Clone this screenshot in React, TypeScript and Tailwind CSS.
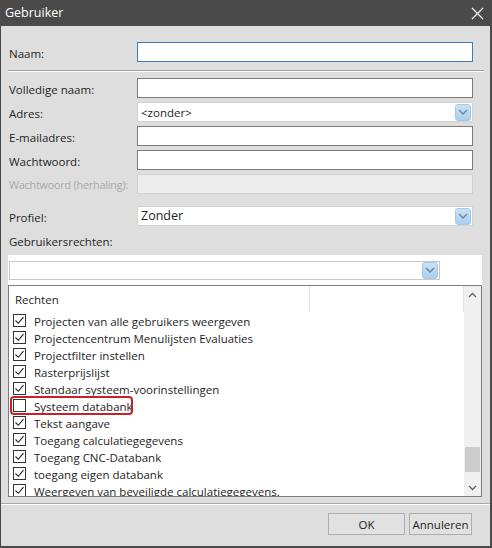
import React from "react";

const font = { fontFamily: '"Segoe UI", "Open Sans", "Noto Sans", sans-serif' };

const rights: { label: string; checked: boolean; marked?: boolean }[] = [
  { label: "Projecten van alle gebruikers weergeven", checked: true },
  { label: "Projectencentrum Menulijsten Evaluaties", checked: true },
  { label: "Projectfilter instellen", checked: true },
  { label: "Rasterprijslijst", checked: true },
  { label: "Standaar systeem-voorinstellingen", checked: true },
  { label: "Systeem databank", checked: false, marked: true },
  { label: "Tekst aangave", checked: true },
  { label: "Toegang calculatiegegevens", checked: true },
  { label: "Toegang CNC-Databank", checked: true },
  { label: "toegang eigen databank", checked: true },
  { label: "Weergeven van beveiligde calculatiegegevens.", checked: true },
];

function ComboArrow() {
  return (
    <div className="w-[16px] h-[17px] rounded-[3px] bg-gradient-to-b from-[#c9e2f5] to-[#a9cfee] border border-[#a5c8e6] flex items-center justify-center">
      <svg width="10" height="6" viewBox="0 0 10 6">
        <path d="M1 1l4 4 4-4" fill="none" stroke="#6f8aa3" strokeWidth="1.5" />
      </svg>
    </div>
  );
}

function Row({ label, children, disabled }: { label: string; children: React.ReactNode; disabled?: boolean }) {
  return (
    <div className="flex items-center h-[20px] pl-[8px]">
      <div
        className={`w-[128px] pt-[3px] whitespace-nowrap ${
          disabled ? "text-[#a8a8a8] text-[10.8px] tracking-[-0.2px]" : "text-[#1e1e1e]"
        }`}
      >
        {label}
      </div>
      {children}
    </div>
  );
}

function CheckBox({ checked }: { checked: boolean }) {
  return (
    <div className="w-[13px] h-[13px] border border-[#333] bg-white flex items-center justify-center shrink-0">
      {checked && (
        <svg width="11" height="11" viewBox="0 0 11 11">
          <path d="M1.5 5.5l2.8 2.8L9.5 2.2" fill="none" stroke="#222" strokeWidth="1.1" />
        </svg>
      )}
    </div>
  );
}

export default function App() {
  return (
    <div className="w-[492px] h-[548px] bg-[#4a4a4a] flex flex-col" style={font}>
      <div className="h-[26px] shrink-0 flex items-center justify-between pl-[5px] pr-[8px] text-white text-[12.5px]">
        <span>Gebruiker</span>
        <svg width="13" height="13" viewBox="0 0 13 13">
          <path d="M1 1l11 11M12 1L1 12" stroke="#fff" strokeWidth="1.2" />
        </svg>
      </div>

      <div className="flex-1 ml-[1px] mr-[2px] mb-[2px] bg-[#dedede] flex flex-col text-[11.5px] text-[#1e1e1e]">
        <div className="mt-[16px]">
          <Row label="Naam:">
            <div className="w-[336px] h-[20px] bg-white border border-[#3a7db5]" />
          </Row>
        </div>

        <div className="mt-[8px] ml-[7px] mr-[6px] h-[2px] border-t border-[#a0a0a0] border-b border-b-white" />

        <div className="mt-[6px] flex flex-col gap-[4px]">
          <Row label="Volledige naam:">
            <div className="w-[336px] h-[20px] bg-white border border-[#7a7a7a]" />
          </Row>
          <Row label="Adres:">
            <div className="w-[336px] h-[20px] bg-white border border-[#d2d2d2] flex items-center justify-between pl-[3px] pr-[1px]">
              <span className="pt-[1px]">&lt;zonder&gt;</span>
              <ComboArrow />
            </div>
          </Row>
          <Row label="E-mailadres:">
            <div className="w-[336px] h-[20px] bg-white border border-[#7a7a7a]" />
          </Row>
          <Row label="Wachtwoord:">
            <div className="w-[336px] h-[20px] bg-white border border-[#7a7a7a]" />
          </Row>
          <Row label="Wachtwoord (herhaling):" disabled>
            <div className="w-[336px] h-[20px] bg-[#ececec] border border-[#d0d0d0]" />
          </Row>
        </div>

        <div className="mt-[12px]">
          <Row label="Profiel:">
            <div className="w-[336px] h-[20px] bg-white border border-[#d2d2d2] flex items-center justify-between pl-[3px] pr-[1px] text-[12.5px]">
              <span className="pt-[1px]">Zonder</span>
              <ComboArrow />
            </div>
          </Row>
        </div>

        <div className="mt-[6px] pl-[8px] h-[18px] pt-[2px] flex items-center">Gebruikersrechten:</div>

        <div className="mt-[5px] ml-[7px] mr-[8px] h-[30px] bg-white flex items-center">
          <div className="ml-[1px] w-[431px] h-[19px] border border-[#c8c8c8] flex items-center justify-end pr-[1px]">
            <ComboArrow />
          </div>
        </div>

        <div className="ml-[7px] mr-[8px] h-[212px] bg-white border border-[#7c7c7c] flex overflow-hidden">
          <div className="flex-1 flex flex-col overflow-hidden">
            <div className="h-[26px] shrink-0 flex">
              <div className="w-[301px] border-r border-[#e2e2e2] pl-[6px] pt-[2px] flex items-center">Rechten</div>
              <div className="flex-1 border-r border-[#e2e2e2]" />
            </div>
            <div className="flex flex-col">
              {rights.map((r) => (
                <div key={r.label} className="h-[17px] shrink-0 flex items-center pl-[4px] relative">
                  {r.marked && (
                    <div className="absolute left-[1px] top-[-1px] w-[123px] h-[19px] border-[2.5px] border-[#c8202a] rounded-[4px]" />
                  )}
                  <CheckBox checked={r.checked} />
                  <span className="ml-[8px] pt-[2px] whitespace-nowrap">{r.label}</span>
                </div>
              ))}
            </div>
          </div>
          <div className="w-[17px] bg-[#f0f0f0] flex flex-col items-center">
            <div className="h-[17px] flex items-center justify-center">
              <svg width="9" height="6" viewBox="0 0 9 6">
                <path d="M1 5l3.5-3.5L8 5" fill="none" stroke="#606060" strokeWidth="1.3" />
              </svg>
            </div>
            <div className="flex-1 w-full flex flex-col">
              <div className="flex-1" />
              <div className="h-[25px] mx-[1px] bg-[#cdcdcd]" />
              <div className="h-[7px]" />
            </div>
            <div className="h-[17px] flex items-center justify-center">
              <svg width="9" height="6" viewBox="0 0 9 6">
                <path d="M1 1l3.5 3.5L8 1" fill="none" stroke="#606060" strokeWidth="1.3" />
              </svg>
            </div>
          </div>
        </div>

        <div className="mt-[6px] h-[2px] border-t border-[#a8a8a8] border-b border-b-white" />

        <div className="flex justify-end gap-[4px] mt-[8px] pr-[18px]">
          <div className="w-[77px] h-[22px] bg-[#e1e1e1] border border-[#adadad] flex items-center justify-center pt-[1px]">OK</div>
          <div className="w-[63px] h-[22px] bg-[#e1e1e1] border border-[#adadad] flex items-center justify-center pt-[1px]">Annuleren</div>
        </div>
      </div>
    </div>
  );
}
